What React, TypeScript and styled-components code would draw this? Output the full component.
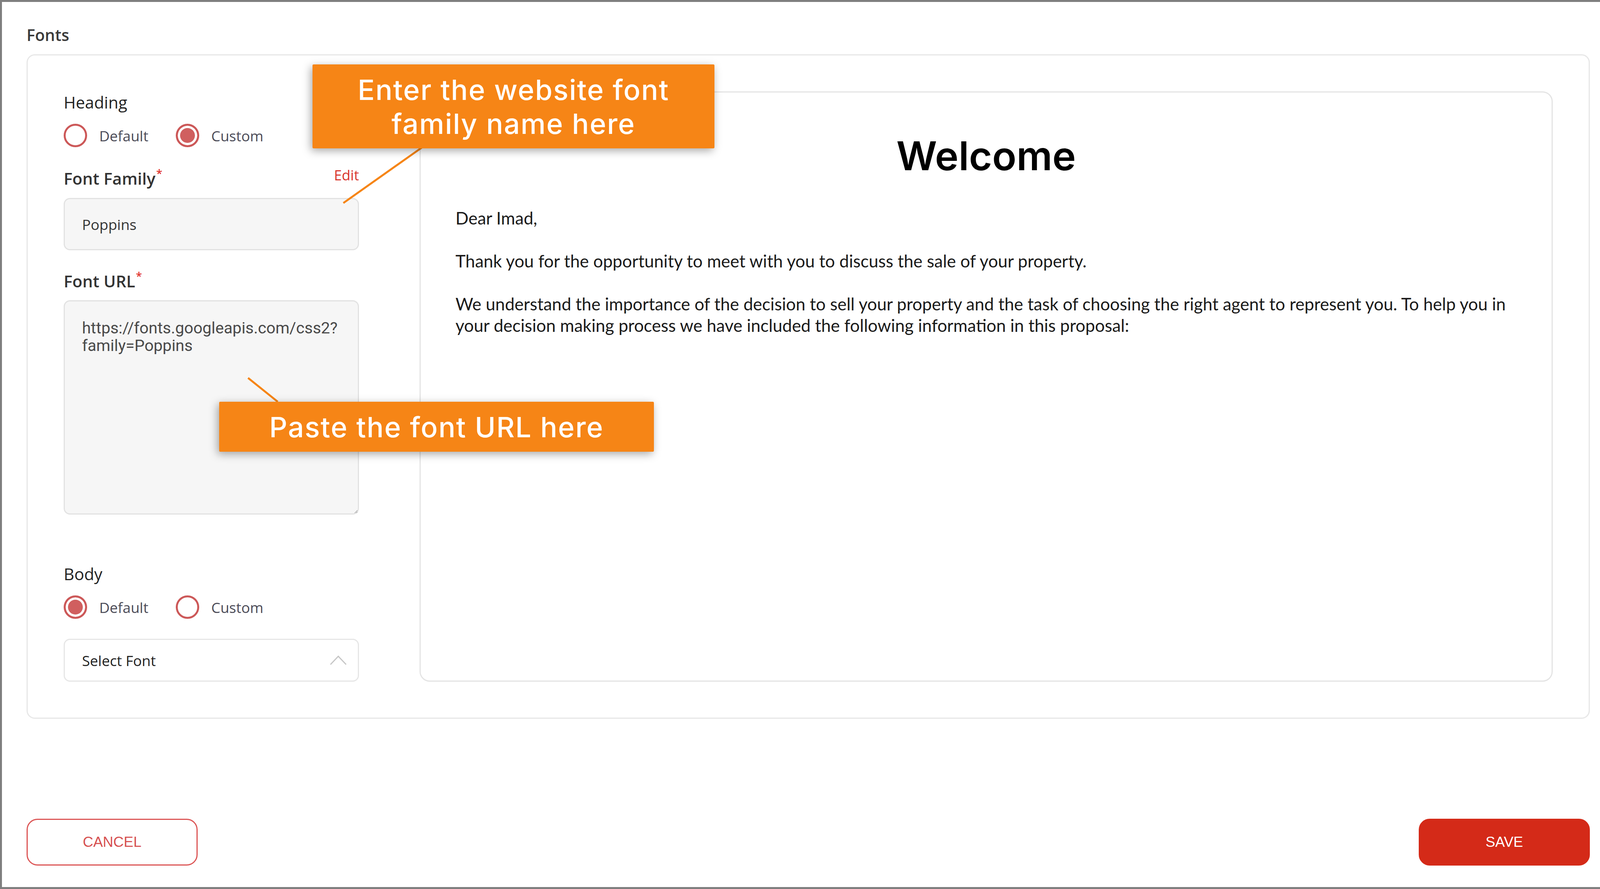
import React from 'react';
import styled, { createGlobalStyle } from 'styled-components';

const GlobalStyle = createGlobalStyle`
  html, body {
    margin: 0;
    padding: 0;
    background: #ffffff;
  }
  * {
    box-sizing: border-box;
  }
`;

const Page = styled.div`
  position: relative;
  width: 4114px;
  height: 2277px;
  border: 5px solid #7f7f7f;
  background: #ffffff;
  display: flex;
  flex-direction: column;
  padding: 62px 39px 55px 63px;
  font-family: 'Open Sans', 'Noto Sans', sans-serif;
`;

const SectionLabel = styled.div`
  font-size: 41px;
  line-height: 44px;
  font-weight: 600;
  color: #3a3a3a;
  margin-bottom: 28px;
`;

const Card = styled.div`
  border: 3px solid #e7e7e7;
  border-radius: 21px;
  padding: 92px;
  display: grid;
  grid-template-columns: 756px 1fr;
  column-gap: 155px;
`;

const SettingsColumn = styled.div`
  display: flex;
  flex-direction: column;
`;

const GroupTitle = styled.div<{ $offset?: number }>`
  font-size: 42px;
  line-height: 56px;
  color: #222222;
  margin-top: ${(p) => p.$offset ?? 0}px;
`;

const RadioRow = styled.div`
  display: flex;
  align-items: center;
  gap: 70px;
  margin-top: 27px;
  height: 60px;
`;

const RadioOption = styled.label`
  display: flex;
  align-items: center;
  gap: 31px;
  font-size: 37px;
  color: #4b4b57;
  cursor: pointer;
`;

const RadioCircle = styled.span<{ $checked: boolean }>`
  width: 60px;
  height: 60px;
  border-radius: 50%;
  border: 5px solid #cc5858;
  background: ${(p) => (p.$checked ? '#d05f5f' : '#ffffff')};
  box-shadow: inset 0 0 0 ${(p) => (p.$checked ? '6px' : '0')} #ffffff;
  flex: none;
`;

const FieldHeader = styled.div<{ $offset: number }>`
  display: flex;
  justify-content: space-between;
  align-items: flex-start;
  margin-top: ${(p) => p.$offset}px;
`;

const FieldLabel = styled.div`
  font-size: 42px;
  line-height: 56px;
  font-weight: 600;
  color: #333333;
`;

const Required = styled.span`
  color: #e0312b;
  font-size: 28px;
  vertical-align: top;
  line-height: 30px;
  margin-left: 2px;
`;

const EditLink = styled.a`
  font-size: 36px;
  line-height: 40px;
  color: #d9342b;
  text-decoration: none;
  cursor: pointer;
`;

const TextInput = styled.input`
  margin-top: 22px;
  height: 134px;
  width: 100%;
  border: 3px solid #e2e2e2;
  border-radius: 16px;
  background: #f6f6f6;
  padding: 0 44px;
  font-family: 'Open Sans', 'Noto Sans', sans-serif;
  font-size: 37px;
  color: #333333;
  outline: none;
`;

const UrlArea = styled.textarea`
  margin-top: 21px;
  height: 549px;
  width: 100%;
  border: 3px solid #e2e2e2;
  border-radius: 16px;
  background: #f6f6f6;
  padding: 46px 8px 46px 44px;
  font-family: Roboto, 'Liberation Sans', sans-serif;
  font-size: 41px;
  line-height: 45px;
  color: #4a4a4a;
  outline: none;
  resize: vertical;
  overflow: hidden;
`;

const SelectBox = styled.div`
  margin-top: 51px;
  height: 110px;
  border: 3px solid #e6e6e6;
  border-radius: 16px;
  background: #ffffff;
  display: flex;
  align-items: center;
  justify-content: space-between;
  padding: 0 28px 0 44px;
  font-size: 37px;
  color: #222222;
  cursor: pointer;
`;

const Preview = styled.div`
  border: 3px solid #e4e4e4;
  border-radius: 26px;
  padding: 102px 89px 0;
  font-family: Lato, 'Open Sans', sans-serif;
`;

const PreviewTitle = styled.h1`
  margin: 0 0 72px;
  text-align: center;
  font-family: Inter, Lato, sans-serif;
  font-weight: 600;
  font-size: 102px;
  line-height: 120px;
  color: #000000;
`;

const PreviewText = styled.p`
  margin: 0 0 55px;
  font-size: 44px;
  line-height: 55px;
  color: #1a1a1a;
`;

const Footer = styled.div`
  margin-top: auto;
  display: flex;
  justify-content: space-between;
`;

const ActionButton = styled.button<{ $primary?: boolean }>`
  width: 438px;
  height: 120px;
  border-radius: 28px;
  border: 3px solid ${(p) => (p.$primary ? '#d42a18' : '#dc5656')};
  background: ${(p) => (p.$primary ? '#d42a18' : '#ffffff')};
  color: ${(p) => (p.$primary ? '#ffffff' : '#d65050')};
  font-family: 'Liberation Sans', Arial, sans-serif;
  font-size: 37px;
  cursor: pointer;
`;

const LeaderLines = styled.svg`
  position: absolute;
  inset: 0;
  width: 100%;
  height: 100%;
  pointer-events: none;
`;

const Callout = styled.div<{ $x: number; $y: number; $w: number; $h: number }>`
  position: absolute;
  left: ${(p) => p.$x}px;
  top: ${(p) => p.$y}px;
  width: ${(p) => p.$w}px;
  height: ${(p) => p.$h}px;
  background: #f68516;
  color: #ffffff;
  display: flex;
  align-items: center;
  justify-content: center;
  text-align: center;
  font-family: Inter, Lato, sans-serif;
  font-weight: 500;
  font-size: 72px;
  letter-spacing: 2px;
  line-height: 87px;
  box-shadow: -4px 6px 22px rgba(0, 0, 0, 0.35);
  border-radius: 3px;
`;

const Chevron = () => (
  <svg width="44" height="26" viewBox="0 0 44 26" fill="none">
    <polyline points="2,24 22,3 42,24" stroke="#c6c6c6" strokeWidth="3" />
  </svg>
);

type RadioGroupProps = { value: 'default' | 'custom' };

const RadioGroup = ({ value }: RadioGroupProps) => (
  <RadioRow>
    <RadioOption>
      <RadioCircle $checked={value === 'default'} />
      Default
    </RadioOption>
    <RadioOption>
      <RadioCircle $checked={value === 'custom'} />
      Custom
    </RadioOption>
  </RadioRow>
);

export default function App() {
  return (
    <>
      <GlobalStyle />
      <Page>
        <SectionLabel>Fonts</SectionLabel>
        <Card>
          <SettingsColumn>
            <GroupTitle>Heading</GroupTitle>
            <RadioGroup value="custom" />
            <FieldHeader $offset={52}>
              <FieldLabel>
                Font Family<Required>*</Required>
              </FieldLabel>
              <EditLink>Edit</EditLink>
            </FieldHeader>
            <TextInput defaultValue="Poppins" />
            <FieldHeader $offset={51}>
              <FieldLabel>
                Font URL<Required>*</Required>
              </FieldLabel>
            </FieldHeader>
            <UrlArea wrap="off" defaultValue={'https://fonts.googleapis.com/css2?\nfamily=Poppins'} />
            <GroupTitle $offset={124}>Body</GroupTitle>
            <RadioGroup value="default" />
            <SelectBox>
              <span>Select Font</span>
              <Chevron />
            </SelectBox>
          </SettingsColumn>
          <Preview>
            <PreviewTitle>Welcome</PreviewTitle>
            <PreviewText>Dear Imad,</PreviewText>
            <PreviewText>Thank you for the opportunity to meet with you to discuss the sale of your property.</PreviewText>
            <PreviewText>
              We understand the importance of the decision to sell your property and the task of choosing the right
              agent to represent you. To help you in your decision making process we have included the following
              information in this proposal:
            </PreviewText>
          </Preview>
        </Card>
        <Footer>
          <ActionButton>CANCEL</ActionButton>
          <ActionButton $primary>SAVE</ActionButton>
        </Footer>

        <LeaderLines viewBox="0 0 4104 2267">
          <line x1="1079" y1="370" x2="874" y2="515" stroke="#f68516" strokeWidth="5" />
          <line x1="630" y1="963" x2="706" y2="1024" stroke="#f68516" strokeWidth="5" />
        </LeaderLines>
        <Callout $x={795} $y={160} $w={1029} $h={215}>
          Enter the website font
          <br />
          family name here
        </Callout>
        <Callout $x={556} $y={1024} $w={1113} $h={128}>
          Paste the font URL here
        </Callout>
      </Page>
    </>
  );
}
